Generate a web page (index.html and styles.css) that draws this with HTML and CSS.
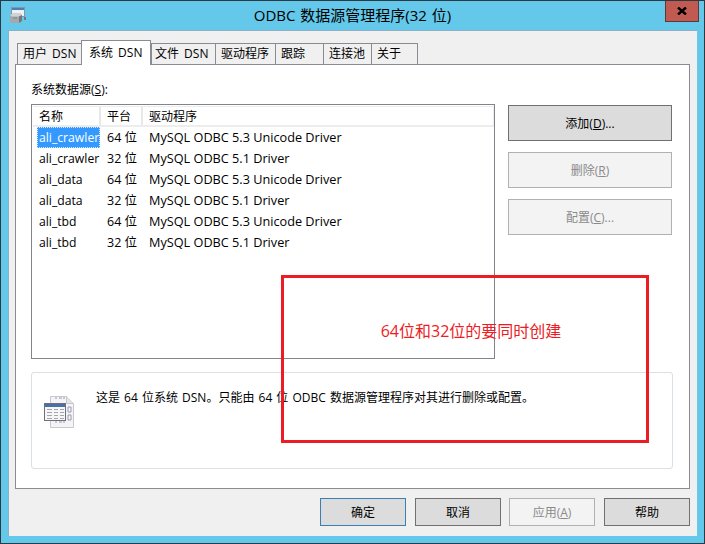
FILE: index.html
```html
<!DOCTYPE html>
<html lang="zh-CN">
<head>
<meta charset="utf-8">
<title>ODBC 数据源管理程序(32 位)</title>
<link rel="stylesheet" href="styles.css">
</head>
<body>
<div class="window">
  <header class="titlebar">
    <svg class="app-icon" width="16" height="16" viewBox="0 0 16 16">
      <rect x="1.500" y="0.500" width="13" height="9" fill="#eef1f3" stroke="#7f98ad"/>
      <rect x="2" y="1" width="12" height="2" fill="#4f7fb0"/>
      <path d="M0 8l4-2h6l2 2v6l-3 2H2l-2-1z" fill="#a4a9ac"/>
      <path d="M0 8l4-2h6l2 2-3 1.500H2z" fill="#cfd3d5"/>
      <path d="M9 9.500V16l3-2V8zM14 10h2v3h-2z" fill="#73787c"/>
      <path d="M3 11h4" stroke="#7d8285"/>
    </svg>
    <h1 class="title">ODBC 数据源管理程序(32 位)</h1>
    <button class="close" aria-label="关闭">
      <svg width="10" height="8" viewBox="0 0 10 8"><path d="M1 0.500l8 7M9 0.500l-8 7" stroke="#000" stroke-width="2.400" fill="none"/></svg>
    </button>
  </header>
  <main class="client">
    <nav class="tabs">
      <span class="tab t1">用户 DSN</span>
      <span class="tab active">系统 DSN</span>
      <span class="tab t1 tight">文件 DSN</span>
      <span class="tab t2">驱动程序</span>
      <span class="tab t3">跟踪</span>
      <span class="tab t3">连接池</span>
      <span class="tab t4">关于</span>
    </nav>
    <section class="pane">
      <div class="label">系统数据源(<u>S</u>):</div>
      <div class="upper">
        <div class="listbox">
          <div class="row head"><span class="c1">名称</span><span class="c2">平台</span><span class="c3">驱动程序</span></div>
          <div class="row"><span class="c1"><span class="sel">ali_crawler</span></span><span class="c2">64 位</span><span class="c3">MySQL ODBC 5.3 Unicode Driver</span></div>
          <div class="row"><span class="c1">ali_crawler</span><span class="c2">32 位</span><span class="c3">MySQL ODBC 5.1 Driver</span></div>
          <div class="row"><span class="c1">ali_data</span><span class="c2">64 位</span><span class="c3">MySQL ODBC 5.3 Unicode Driver</span></div>
          <div class="row"><span class="c1">ali_data</span><span class="c2">32 位</span><span class="c3">MySQL ODBC 5.1 Driver</span></div>
          <div class="row"><span class="c1">ali_tbd</span><span class="c2">64 位</span><span class="c3">MySQL ODBC 5.3 Unicode Driver</span></div>
          <div class="row"><span class="c1">ali_tbd</span><span class="c2">32 位</span><span class="c3">MySQL ODBC 5.1 Driver</span></div>
        </div>
        <div class="side">
          <button class="btn tall">添加(<u>D</u>)...</button>
          <button class="btn tall off">删除(<u>R</u>)</button>
          <button class="btn tall off">配置(<u>C</u>)...</button>
        </div>
      </div>
      <div class="info">
        <svg class="doc" width="32" height="34" viewBox="0 0 32 34">
          <path d="M6.500 1.500h16l7 7v24h-23z" fill="#f4f4f6" stroke="#c8c8cc"/>
          <path d="M22.500 1.500v7h7" fill="#e4e4e8" stroke="#c8c8cc"/>
          <path d="M11 3h2M15 3h3M19 3h2M24 12h3v5h-3zM24 20h3v5h-3zM11 27h2M15 27h3M19 27h2" stroke="#9a9ab4" fill="none"/>
          <rect x="0.500" y="8.500" width="21" height="17" fill="#f6f6f6" stroke="#6c7078"/>
          <rect x="1" y="9" width="20" height="3" fill="#4a6ea8"/>
          <path d="M3 14.500h5M10 14.500h4M16 14.500h4M3 17.500h5M10 17.500h4M16 17.500h4M3 20.500h5M10 20.500h4M16 20.500h4M3 23.500h5M10 23.500h4M16 23.500h4" stroke="#a4a6ac"/>
        </svg>
        <p class="info-text">这是 64 位系统 DSN。只能由 64 位 ODBC 数据源管理程序对其进行删除或配置。</p>
      </div>
    </section>
    <footer class="actions">
      <button class="btn wide default">确定</button>
      <button class="btn wide">取消</button>
      <button class="btn wide off">应用(<u>A</u>)</button>
      <button class="btn wide">帮助</button>
    </footer>
  </main>
  <aside class="note"><span>64位和32位的要同时创建</span></aside>
</div>
</body>
</html>
```
FILE: styles.css
```css
* { box-sizing: border-box; }
html, body { margin: 0; padding: 0; }
body { width: 705px; height: 544px; overflow: hidden; font-family: "Open Sans", "Noto Sans CJK SC", sans-serif; font-size: 12px; color: #000; }
.window { position: relative; width: 705px; height: 544px; background: #63c8ea; border: 1px solid #2b3a42; padding: 0 7px 7px; display: flex; flex-direction: column; }
.titlebar { height: 29px; flex: none; display: flex; align-items: flex-start; position: relative; }
.app-icon { position: absolute; left: 2px; top: 6px; }
.title { margin: 0; width: 100%; text-align: center; font-size: 15px; font-weight: 400; line-height: 28px; word-spacing: 1px; color: #000; }
.close { position: absolute; right: -2px; top: 0; width: 34px; height: 21px; padding: 0; background: #c15a50; border: 1px solid #5a3a38; border-top: 0; display: flex; align-items: center; justify-content: center; }
.client { flex: 1; background: #f0f0f0; border: 1px solid #8fb0c4; border-width: 1px 0 0 1px; padding: 9px 7px 10px 6px; display: flex; flex-direction: column; }
.tabs { height: 24px; flex: none; display: flex; align-items: flex-end; padding-left: 2px; position: relative; z-index: 1; }
.tab { height: 22px; margin-bottom: -1px; background: #f0f0f0; border: 1px solid #8a8c94; border-right-width: 0; padding: 0 0 0 5px; line-height: 19px; white-space: nowrap; font-size: 12px; word-spacing: 2px; }
.tab:last-child { border-right-width: 1px; }
.t1 { width: 64px; }
.tight { padding-left: 3px; }
.t2 { width: 60px; }
.t3 { width: 48px; }
.t4 { width: 47px; }
.tab.active { width: 70px; height: 25px; background: #fff; border-width: 1px; border-bottom: 0; margin: 0 0 -1px 0; padding-left: 7px; line-height: 23px; position: relative; z-index: 2; }
.pane { height: 425px; flex: none; background: #fff; border: 1px solid #8a8c94; padding: 16px 15px 0; }
.label { height: 23px; line-height: 18px; }
.upper { display: flex; height: 255px; }
.listbox { width: 464px; height: 255px; border: 1px solid #82848c; padding: 1px 0 0 1px; flex: none; }
.row { display: flex; height: 21px; line-height: 21px; font-size: 12.700px; padding-left: 6px; white-space: nowrap; }
.head { height: 21px; padding: 0; background: #fff; font-size: 12px; border: 1px solid #ededed; border-width: 1px 1px 2px 0; line-height: 20px; }
.head span { border-right: 2px solid #e8e8e8; }
.c1 { width: 68px; flex: none; font-size: 12.200px; }
.c2 { width: 42px; flex: none; font-size: 12.500px; }
.head .c1 { width: 68px; padding-left: 6px; font-size: 12px; }
.head .c2 { width: 42px; padding-left: 6px; font-size: 12px; }
.head .c3 { flex: 1; border-right: 0; padding-left: 6px; }
.sel { display: inline-block; margin-left: -2px; width: 63px; height: 21px; padding-left: 2px; background: #3399ff; color: #fff; outline: 1px dotted #d8eaff; outline-offset: -1px; overflow: hidden; }
.side { margin-left: 13px; display: flex; flex-direction: column; gap: 11px; padding-top: 1px; }
.btn { display: block; padding: 0; background: #dcdcdc; border: 1px solid #707070; font: inherit; color: #000; text-align: center; }
.btn.tall { width: 164px; height: 36px; }
.btn.wide { width: 86px; height: 28px; }
.btn.off { background: #f3f3f3; border-color: #adb2b5; color: #8a8a8a; }
.btn.wide.off { margin-left: -1px; }
.btn.default { border-color: #3c7fb1; }
.info { margin-top: 13px; width: 642px; height: 97px; border: 1px solid #d9e0e6; border-radius: 3px; display: flex; padding: 0; }
.doc { flex: none; margin: 22px 0 0 12px; }
.info-text { margin: 16px 0 0 20px; line-height: 18px; word-spacing: 1px; }
.actions { margin-top: 9px; display: flex; justify-content: flex-end; gap: 9px; height: 28px; flex: none; }
.note { position: absolute; left: 280px; top: 274px; width: 368px; height: 168px; border: 3px solid #ed1c24; display: flex; justify-content: center; padding-top: 41px; padding-left: 12px; color: #ed1c24; font-size: 16px; line-height: 24px; }
```
